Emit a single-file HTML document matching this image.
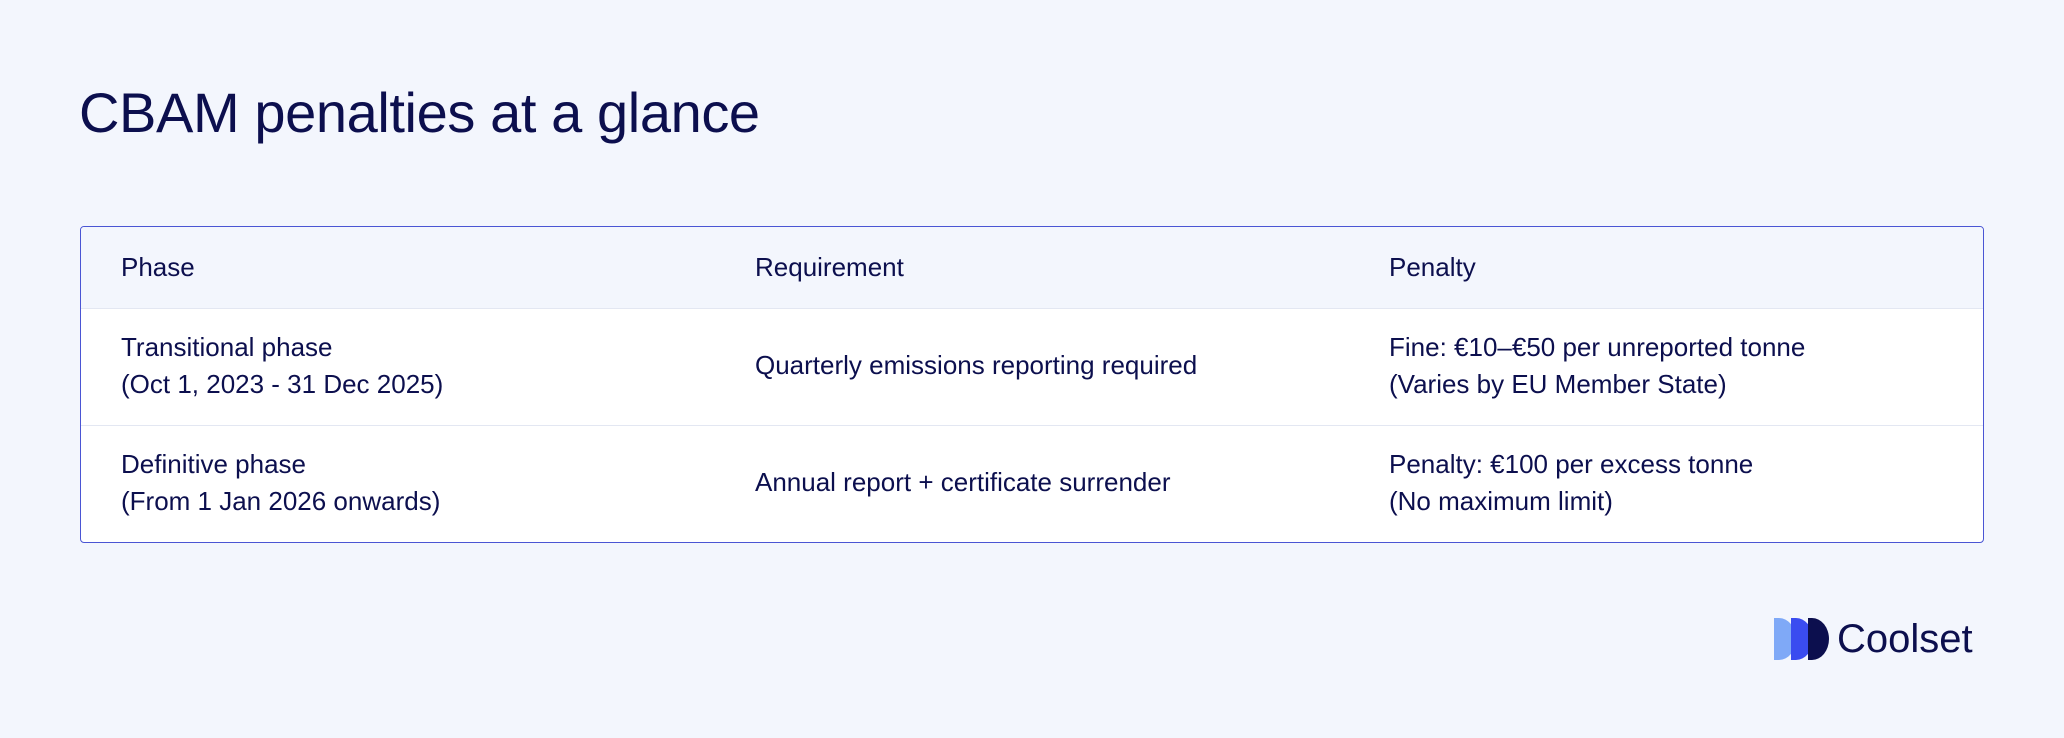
<!DOCTYPE html>
<html><head><meta charset="utf-8"><style>
html,body{margin:0;padding:0;}
body{width:2064px;height:738px;background:#f3f6fd;font-family:"Liberation Sans",sans-serif;color:#0c0f4e;position:relative;overflow:hidden;}
h1{position:absolute;left:79px;top:78px;margin:0;font-weight:400;font-size:56px;letter-spacing:-0.4px;line-height:70px;}
.tbl{position:absolute;left:80px;top:226px;width:1902px;height:315px;border:1.5px solid #4a55d4;border-radius:4px;overflow:hidden;background:#fff;}
.row{position:absolute;left:0;width:100%;border-bottom:1px solid #e3e7f2;}
.c{position:absolute;font-size:26px;line-height:37px;letter-spacing:0px;}
</style></head><body>
<h1>CBAM penalties at a glance</h1>
<div class="tbl">
 <div class="row" style="top:0;height:81px;background:#f3f6fd;">
  <div class="c" style="left:40px;top:22px;">Phase</div>
  <div class="c" style="left:674px;top:22px;">Requirement</div>
  <div class="c" style="left:1308px;top:22px;">Penalty</div>
 </div>
 <div class="row" style="top:82px;height:116px;">
  <div class="c" style="left:40px;top:20px;">Transitional phase<br>(Oct 1, 2023 - 31 Dec 2025)</div>
  <div class="c" style="left:674px;top:38px;">Quarterly emissions reporting required</div>
  <div class="c" style="left:1308px;top:20px;">Fine: €10–€50 per unreported tonne<br>(Varies by EU Member State)</div>
 </div>
 <div class="row" style="top:199px;height:116px;border:none;">
  <div class="c" style="left:40px;top:20px;">Definitive phase<br>(From 1 Jan 2026 onwards)</div>
  <div class="c" style="left:674px;top:38px;">Annual report + certificate surrender</div>
  <div class="c" style="left:1308px;top:20px;">Penalty: €100 per excess tonne<br>(No maximum limit)</div>
 </div>
</div>
<svg style="position:absolute;left:1774px;top:618px" width="56" height="42" viewBox="0 0 56 42">
 <path d="M0 0 H5 A17 21 0 0 1 5 42 H0 Z" fill="#7fa9f7"/>
 <path d="M17 0 H22 A17 21 0 0 1 22 42 H17 Z" fill="#3a4cf0"/>
 <path d="M34 0 H38 A17 21 0 0 1 38 42 H34 Z" fill="#0c0f4e"/>
</svg>
<div style="position:absolute;left:1837px;top:614px;font-size:40px;line-height:50px;letter-spacing:0px;">Coolset</div>
</body></html>
